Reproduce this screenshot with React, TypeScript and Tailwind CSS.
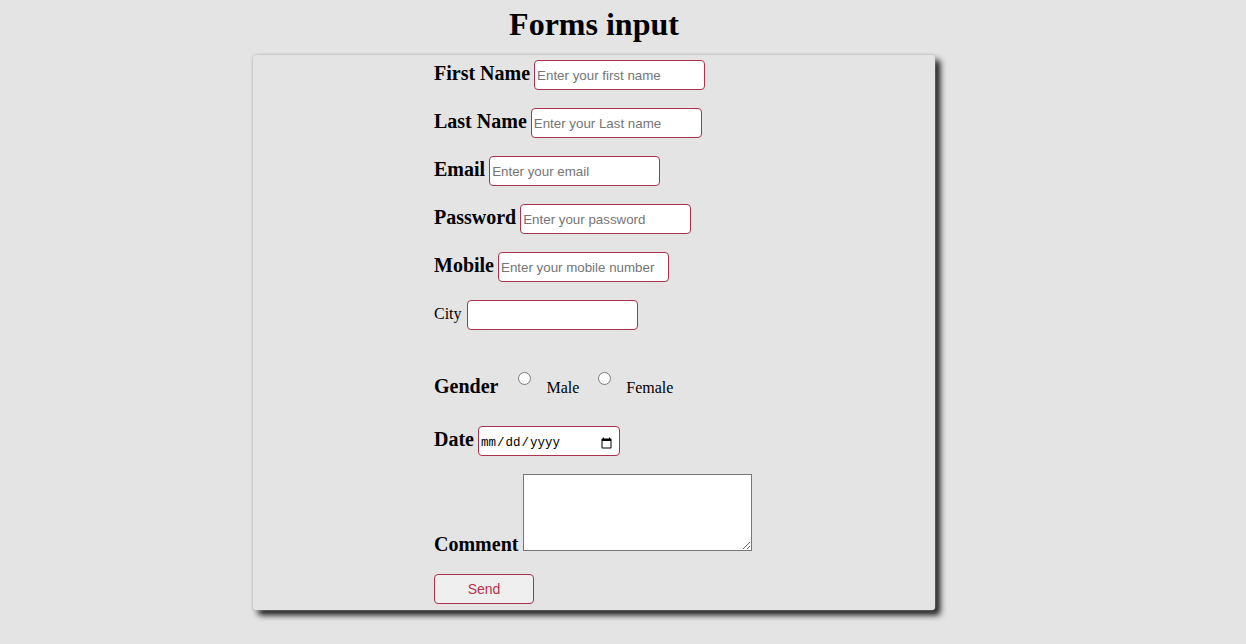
import React from "react";

const baseInput =
  "h-[30px] border border-[#a8324f] rounded-[4px] bg-white px-[2px] text-[13.33px] text-black placeholder:text-[#757575] outline-none";
const inputCls = baseInput + " w-[171px]";
const labelCls = "font-bold text-[20px] leading-[23px] text-black";

function Row({ label, placeholder, type = "text" }: { label: string; placeholder: string; type?: string }) {
  return (
    <div className="flex items-baseline gap-[4px] h-[30px] mb-[18px]">
      <span className={labelCls}>{label}</span>
      <input type={type} placeholder={placeholder} className={inputCls} style={{ fontFamily: "Arial, 'Liberation Sans', sans-serif" }} />
    </div>
  );
}

export default function App() {
  return (
    <div className="min-h-[644px] w-full bg-[#e4e4e4] pt-[6px]" style={{ fontFamily: "'Liberation Serif', 'Times New Roman', serif" }}>
      <div className="w-[1188px]">
        <h1 className="text-center font-bold text-[32px] leading-[37px] text-black">Forms input</h1>
        <div className="mx-auto mt-[12px] w-[682px] h-[555px] rounded-[3px] bg-[#e4e4e4] shadow-[0_0_3px_#b0b0b0,5px_5px_6px_#111] pl-[181px] pt-[5px]">
          <Row label="First Name" placeholder="Enter your first name" />
          <Row label="Last Name" placeholder="Enter your Last name" />
          <Row label="Email" placeholder="Enter your email" type="email" />
          <Row label="Password" placeholder="Enter your password" type="password" />
          <Row label="Mobile" placeholder="Enter your mobile number" type="tel" />
          <div className="flex items-baseline gap-[5px] h-[30px] mb-[41px]">
            <span className="text-[16px] text-black">City</span>
            <input type="text" className={inputCls} />
          </div>
          <div className="flex items-start h-[37px] mb-[18px]">
            <span className={labelCls + " mt-[4px]"}>Gender</span>
            <input type="radio" name="g" className="m-0 ml-[20px] w-[13px] h-[13px] mt-[1px]" />
            <span className="ml-[15px] mt-[8px] text-[16px] leading-[18px] text-black">Male</span>
            <input type="radio" name="g" className="m-0 ml-[19px] w-[13px] h-[13px] mt-[1px]" />
            <span className="ml-[15px] mt-[8px] text-[16px] leading-[18px] text-black">Female</span>
          </div>
          <div className="flex items-baseline gap-[4px] h-[30px] mb-[18px]">
            <span className={labelCls}>Date</span>
            <input
              type="date"
              className={baseInput + " w-[142px] pl-[1px] pr-[4px] pt-[4px]"}
              style={{ fontFamily: "'Liberation Mono', 'DejaVu Sans Mono', monospace", fontSize: "12.5px" }}
            />
          </div>
          <div className="flex items-end gap-[5px] mb-[23px]">
            <span className={labelCls + " mb-[-5px]"}>Comment</span>
            <textarea className="w-[229px] h-[77px] border border-[#767676] bg-white block" />
          </div>
          <button
            className="w-[100px] h-[30px] border border-[#a8324f] rounded-[4px] bg-[#efefef] text-[14px] text-[#b8334f]"
            style={{ fontFamily: "Arial, 'Liberation Sans', sans-serif" }}
          >
            Send
          </button>
        </div>
      </div>
    </div>
  );
}
